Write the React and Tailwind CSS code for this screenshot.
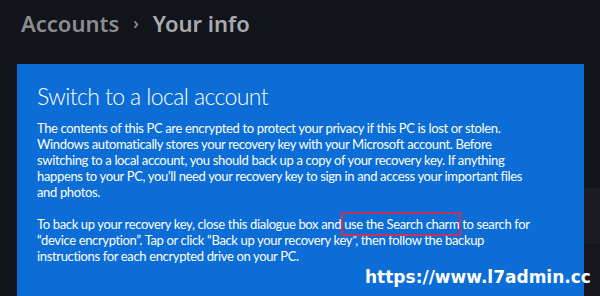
export default function App() {
  return (
    <div className="relative h-[296px] w-[600px] overflow-hidden bg-[#11141b] font-['Noto_Sans',sans-serif]">
      <div className="flex items-center gap-[14px] pl-[21px] pt-[8px] text-[22px] font-semibold leading-[30px]">
        <span className="text-[#8b8c90]">Accounts</span>
        <span className="text-[16px] text-[#8b8c90]">›</span>
        <span className="text-[#a9aaae]">Your info</span>
      </div>

      <div className="absolute right-0 top-[188px] h-[56px] w-[16px] bg-[#1b1d22]" />
      <div className="absolute right-0 top-[246px] h-[50px] w-[16px] bg-[#15171c]" />

      <div className="ml-[17px] mt-[26px] h-[240px] w-[567px] bg-[#0b6dd5] px-[20px] pt-[17px] font-['Lato',sans-serif] text-white">
        <h1 className="whitespace-nowrap text-[23px] font-light leading-[30px] tracking-[-0.6px]">Switch to a local account</h1>
        <p className="mt-[9px] whitespace-nowrap text-[13px] leading-[16px] tracking-[-0.35px]">
          The contents of this PC are encrypted to protect your privacy if this PC is lost or stolen.
          <br />
          Windows automatically stores your recovery key with your Microsoft account. Before
          <br />
          switching to a local account, you should back up a copy of your recovery key. If anything
          <br />
          happens to your PC, you’ll need your recovery key to sign in and access your important files
          <br />
          and photos.
        </p>
        <p className="mt-[16px] whitespace-nowrap text-[13px] leading-[16px] tracking-[-0.35px]">
          To back up your recovery key, close this dialogue box and{" "}
          <span className="relative">
            use the Search charm
            <span className="absolute -bottom-[4px] -left-[3px] -right-[2px] -top-[4px] border-2 border-[#c53457]" />
          </span>{" "}
          to search for
          <br />
          “device encryption”. Tap or click “Back up your recovery key”, then follow the backup
          <br />
          instructions for each encrypted drive on your PC.
        </p>
      </div>

      <div className="absolute left-[365px] top-[265px] whitespace-nowrap font-['DejaVu_Sans',sans-serif] text-[17px] font-bold text-white">
        https://www.l7admin.cc
      </div>
    </div>
  );
}
